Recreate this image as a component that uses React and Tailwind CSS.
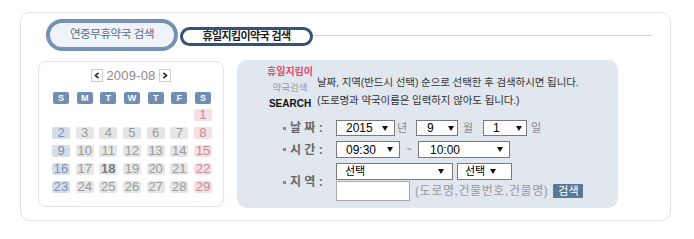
import React from 'react';

// 달력 데이터 (2009-08, 화면에 보이는 5줄만)
const weeks = [
  [null, null, null, null, null, null, 1],
  [2, 3, 4, 5, 6, 7, 8],
  [9, 10, 11, 12, 13, 14, 15],
  [16, 17, 18, 19, 20, 21, 22],
  [23, 24, 25, 26, 27, 28, 29],
];
const dayNames = ['S', 'M', 'T', 'W', 'T', 'F', 'S'];

const Arrow = () => (
  <svg width="6" height="5" viewBox="0 0 6 5" className="shrink-0">
    <path d="M0 0H6L3 5Z" fill="#111" />
  </svg>
);

const Sel = ({ className, text, textClass = 'text-[12px]' }) => (
  <div className={`flex items-center bg-white border border-[#7a7a7a] ${className}`}>
    <span className={`leading-none text-black ${textClass}`}>{text}</span>
    <span className="ml-auto flex">
      <Arrow />
    </span>
  </div>
);

const Chevron = ({ dir }) => (
  <div className="w-[12px] h-[13px] border border-[#cfcfcf] bg-white flex items-center justify-center">
    <svg width="6" height="7" viewBox="0 0 6 7">
      {dir === 'left' ? (
        <path d="M4.5 0.8L1.5 3.5L4.5 6.2" stroke="#222" strokeWidth="1.6" fill="none" />
      ) : (
        <path d="M1.5 0.8L4.5 3.5L1.5 6.2" stroke="#222" strokeWidth="1.6" fill="none" />
      )}
    </svg>
  </div>
);

const Label = ({ children }) => (
  <div className="w-[53px] flex items-center text-[12px] font-bold text-[#666] leading-none">
    <span className="w-[3px] h-[3px] bg-[#8a8a8a] mr-[4px]" />
    <span className="whitespace-pre">{children}</span>
  </div>
);

const Calendar = () => {
  const cellColor = (i) => {
    if (i === 0) return 'bg-[#d4dde9] text-[#8192ab]';
    if (i === 6) return 'bg-[#f5dee4] text-[#b9909b]';
    return 'bg-[#e6e6e6] text-[#9b9b9b]';
  };
  return (
    <div className="mt-[1px] ml-[17px] w-[186px] h-[146px] border border-[#dfe5ea] rounded-[8px] pt-[7px]">
      <div className="flex items-center justify-center">
        <Chevron dir="left" />
        <span className="mx-[3px] text-[13px] leading-none text-[#8c8c8c] tracking-[0.2px]">2009-08</span>
        <Chevron dir="right" />
      </div>
      <div className="ml-[13px] mt-[10px] w-[160px]">
        <div className="flex justify-between">
          {dayNames.map((d, i) => (
            <div key={i} className="w-[18px] flex justify-center">
              <div className="w-[16px] h-[12px] rounded-[2px] bg-[#6f8db5] text-white text-[9px] font-bold leading-[12px] text-center">
                {d}
              </div>
            </div>
          ))}
        </div>
        <div className="mt-[5px] flex flex-col gap-y-[6px]">
          {weeks.map((w, r) => (
            <div key={r} className="flex justify-between">
              {w.map((d, i) =>
                d === null ? (
                  <div key={i} className="w-[18px] h-[12px]" />
                ) : (
                  <div
                    key={i}
                    className={`w-[18px] h-[12px] rounded-[2px] text-[13px] leading-[12px] text-center ${cellColor(i)} ${d === 18 ? 'font-bold !text-[#7a7a7a]' : ''}`}
                  >
                    {d}
                  </div>
                )
              )}
            </div>
          ))}
        </div>
      </div>
    </div>
  );
};

const SearchPanel = () => (
  <div className="ml-[13px] w-[381px] h-[148px] bg-[#e0e7ef] rounded-[10px] pl-[28px] pt-[4px]">
    <div className="flex items-start">
      <div className="w-[50px] flex flex-col items-center leading-[16px]">
        <span className="text-[10px] font-bold text-[#e9446a]">휴일지킴이</span>
        <span className="text-[9.5px] text-[#9a9a9a]">약국검색</span>
        <span className="text-[10px] font-bold text-[#111]">SEARCH</span>
      </div>
      <div className="ml-[2px] mt-[9px] text-[10.5px] leading-[18px] text-[#333] tracking-[-0.1px]">
        <p>날짜, 지역(반드시 선택) 순으로 선택한 후 검색하시면 됩니다.</p>
        <p>(도로명과 약국이름은 입력하지 않아도 됩니다.)</p>
      </div>
    </div>

    <div className="ml-[18px] mt-[8px]">
      {/* 날짜 */}
      <div className="flex h-[16px]">
        <Label>{'날 짜 :'}</Label>
        <Sel className="w-[59px] pl-[9px] pr-[6px]" text="2015" />
        <span className="w-[21px] pl-[2px] text-[11px] text-[#888] leading-[16px]">년</span>
        <Sel className="w-[42px] pl-[10px] pr-[3px]" text="9" />
        <span className="w-[25px] pl-[5px] text-[11px] text-[#888] leading-[16px]">월</span>
        <Sel className="w-[44px] pl-[9px] pr-[4px]" text="1" />
        <span className="pl-[4px] text-[11px] text-[#888] leading-[16px]">일</span>
      </div>

      {/* 시간 */}
      <div className="flex h-[17px] mt-[5px]">
        <Label>{'시 간 :'}</Label>
        <Sel className="w-[64px] pl-[9px] pr-[6px]" text="09:30" />
        <span className="w-[18px] text-center text-[10px] text-[#888] leading-[17px]">~</span>
        <Sel className="w-[92px] pl-[11px] pr-[6px]" text="10:00" />
      </div>

      {/* 지역 */}
      <div className="flex mt-[5px]">
        <Label>{'지 역 :'}</Label>
        <div className="flex flex-col">
          <div className="flex h-[17px]">
            <Sel className="w-[117px] pl-[8px] pr-[8px]" text="선택" textClass="text-[11px]" />
            <Sel className="ml-[4px] w-[55px] pl-[7px] pr-[15px]" text="선택" textClass="text-[11px]" />
          </div>
          <div className="flex items-center mt-[1px]">
            <input className="w-[74px] h-[20px] bg-white border border-[#a9a9a9] outline-none" />
            <span className="ml-[5px] text-[12px] text-[#999] tracking-[0.6px]">(도로명,건물번호,건물명)</span>
            <button className="ml-[5px] w-[30px] h-[14px] bg-[#5a7896] text-white text-[11px] leading-[14px] rounded-[1px]">
              검색
            </button>
          </div>
        </div>
      </div>
    </div>
  </div>
);

export default function App() {
  return (
    <div className="w-[694px] h-[239px] bg-white pt-[12px] pl-[20px] font-['Liberation_Sans','Noto_Sans_CJK_KR',sans-serif]">
      <div className="w-[651px] h-[209px] border border-[#e2e2e2] rounded-[10px]">
        {/* 탭 */}
        <div className="flex items-start ml-[25px] mt-[6px]">
          <div className="w-[132px] h-[32px] rounded-full border-[4px] border-[#7791b4] bg-[#eef2f9] flex items-center justify-center text-[11.5px] tracking-[-0.4px] text-[#5b6e8a]">
            연중무휴약국 검색
          </div>
          <div className="ml-[2px] mt-[8px] w-[133px] h-[19px] rounded-full border-[3px] border-[#34527c] bg-white flex items-center justify-center text-[11px] tracking-[-0.6px] font-semibold text-[#222]">
            휴일지킴이약국 검색
          </div>
          <div className="flex-1 mr-[18px] mt-[16px] h-px bg-[#cfd8e0]" />
        </div>

        <div className="flex items-start mt-[9px]">
          <Calendar />
          <SearchPanel />
        </div>
      </div>
    </div>
  );
}
